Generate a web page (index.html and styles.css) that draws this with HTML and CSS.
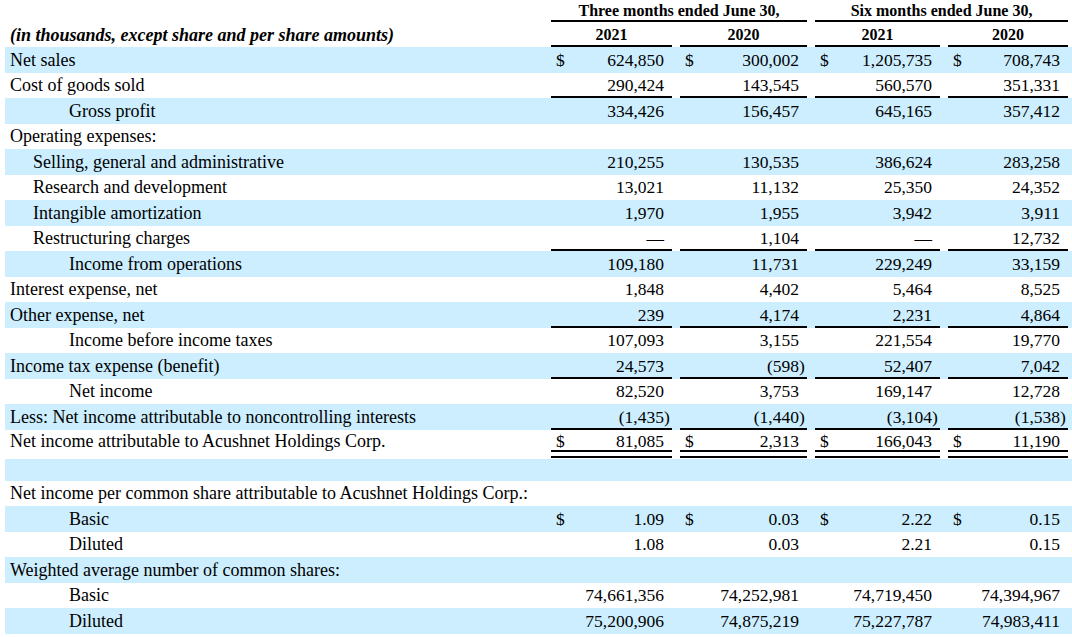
FILE: index.html
```html
<!DOCTYPE html>
<html>
<head>
<meta charset="utf-8">
<title>Statement of Operations</title>
<link rel="stylesheet" href="styles.css">
</head>
<body>
<table class="fin">
  <colgroup>
    <col class="c-label">
    <col class="c-d"><col class="c-n1"><col class="c-p"><col class="c-gap">
    <col class="c-d"><col class="c-n2"><col class="c-p"><col class="c-gap">
    <col class="c-d"><col class="c-n3"><col class="c-p"><col class="c-gap">
    <col class="c-d"><col class="c-n4"><col class="c-p"><col class="c-end">
  </colgroup>
  <tbody>
    <tr class="h1">
      <td></td>
      <td colspan="7" class="hd line">Three months ended June 30,</td>
      <td></td>
      <td colspan="7" class="hd line">Six months ended June 30,</td>
      <td></td>
    </tr>
    <tr class="h2">
      <td class="unit">(in thousands, except share and per share amounts)</td>
      <td colspan="3" class="hd line">2021</td><td></td>
      <td colspan="3" class="hd line">2020</td><td></td>
      <td colspan="3" class="hd line">2021</td><td></td>
      <td colspan="3" class="hd line">2020</td><td></td>
    </tr>

    <tr class="b">
      <td class="lb">Net sales</td>
      <td class="d">$</td><td class="n">624,850</td><td class="p"></td><td></td>
      <td class="d">$</td><td class="n">300,002</td><td class="p"></td><td></td>
      <td class="d">$</td><td class="n">1,205,735</td><td class="p"></td><td></td>
      <td class="d">$</td><td class="n">708,743</td><td class="p"></td><td></td>
    </tr>
    <tr class="u">
      <td class="lb">Cost of goods sold</td>
      <td class="d"></td><td class="n">290,424</td><td class="p"></td><td></td>
      <td class="d"></td><td class="n">143,545</td><td class="p"></td><td></td>
      <td class="d"></td><td class="n">560,570</td><td class="p"></td><td></td>
      <td class="d"></td><td class="n">351,331</td><td class="p"></td><td></td>
    </tr>
    <tr class="b">
      <td class="lb in2">Gross profit</td>
      <td class="d"></td><td class="n">334,426</td><td class="p"></td><td></td>
      <td class="d"></td><td class="n">156,457</td><td class="p"></td><td></td>
      <td class="d"></td><td class="n">645,165</td><td class="p"></td><td></td>
      <td class="d"></td><td class="n">357,412</td><td class="p"></td><td></td>
    </tr>
    <tr>
      <td class="lb">Operating expenses:</td>
      <td colspan="16"></td>
    </tr>
    <tr class="b">
      <td class="lb in1">Selling, general and administrative</td>
      <td class="d"></td><td class="n">210,255</td><td class="p"></td><td></td>
      <td class="d"></td><td class="n">130,535</td><td class="p"></td><td></td>
      <td class="d"></td><td class="n">386,624</td><td class="p"></td><td></td>
      <td class="d"></td><td class="n">283,258</td><td class="p"></td><td></td>
    </tr>
    <tr>
      <td class="lb in1">Research and development</td>
      <td class="d"></td><td class="n">13,021</td><td class="p"></td><td></td>
      <td class="d"></td><td class="n">11,132</td><td class="p"></td><td></td>
      <td class="d"></td><td class="n">25,350</td><td class="p"></td><td></td>
      <td class="d"></td><td class="n">24,352</td><td class="p"></td><td></td>
    </tr>
    <tr class="b">
      <td class="lb in1">Intangible amortization</td>
      <td class="d"></td><td class="n">1,970</td><td class="p"></td><td></td>
      <td class="d"></td><td class="n">1,955</td><td class="p"></td><td></td>
      <td class="d"></td><td class="n">3,942</td><td class="p"></td><td></td>
      <td class="d"></td><td class="n">3,911</td><td class="p"></td><td></td>
    </tr>
    <tr class="u">
      <td class="lb in1">Restructuring charges</td>
      <td class="d"></td><td class="n">—</td><td class="p"></td><td></td>
      <td class="d"></td><td class="n">1,104</td><td class="p"></td><td></td>
      <td class="d"></td><td class="n">—</td><td class="p"></td><td></td>
      <td class="d"></td><td class="n">12,732</td><td class="p"></td><td></td>
    </tr>
    <tr class="b">
      <td class="lb in2">Income from operations</td>
      <td class="d"></td><td class="n">109,180</td><td class="p"></td><td></td>
      <td class="d"></td><td class="n">11,731</td><td class="p"></td><td></td>
      <td class="d"></td><td class="n">229,249</td><td class="p"></td><td></td>
      <td class="d"></td><td class="n">33,159</td><td class="p"></td><td></td>
    </tr>
    <tr>
      <td class="lb">Interest expense, net</td>
      <td class="d"></td><td class="n">1,848</td><td class="p"></td><td></td>
      <td class="d"></td><td class="n">4,402</td><td class="p"></td><td></td>
      <td class="d"></td><td class="n">5,464</td><td class="p"></td><td></td>
      <td class="d"></td><td class="n">8,525</td><td class="p"></td><td></td>
    </tr>
    <tr class="b u">
      <td class="lb">Other expense, net</td>
      <td class="d"></td><td class="n">239</td><td class="p"></td><td></td>
      <td class="d"></td><td class="n">4,174</td><td class="p"></td><td></td>
      <td class="d"></td><td class="n">2,231</td><td class="p"></td><td></td>
      <td class="d"></td><td class="n">4,864</td><td class="p"></td><td></td>
    </tr>
    <tr>
      <td class="lb in2">Income before income taxes</td>
      <td class="d"></td><td class="n">107,093</td><td class="p"></td><td></td>
      <td class="d"></td><td class="n">3,155</td><td class="p"></td><td></td>
      <td class="d"></td><td class="n">221,554</td><td class="p"></td><td></td>
      <td class="d"></td><td class="n">19,770</td><td class="p"></td><td></td>
    </tr>
    <tr class="b u">
      <td class="lb">Income tax expense (benefit)</td>
      <td class="d"></td><td class="n">24,573</td><td class="p"></td><td></td>
      <td class="d"></td><td class="n">(598</td><td class="p">)</td><td></td>
      <td class="d"></td><td class="n">52,407</td><td class="p"></td><td></td>
      <td class="d"></td><td class="n">7,042</td><td class="p"></td><td></td>
    </tr>
    <tr>
      <td class="lb in2">Net income</td>
      <td class="d"></td><td class="n">82,520</td><td class="p"></td><td></td>
      <td class="d"></td><td class="n">3,753</td><td class="p"></td><td></td>
      <td class="d"></td><td class="n">169,147</td><td class="p"></td><td></td>
      <td class="d"></td><td class="n">12,728</td><td class="p"></td><td></td>
    </tr>
    <tr class="b u">
      <td class="lb">Less: Net income attributable to noncontrolling interests</td>
      <td class="d"></td><td class="n">(1,435</td><td class="p">)</td><td></td>
      <td class="d"></td><td class="n">(1,440</td><td class="p">)</td><td></td>
      <td class="d"></td><td class="n">(3,104</td><td class="p">)</td><td></td>
      <td class="d"></td><td class="n">(1,538</td><td class="p">)</td><td></td>
    </tr>
    <tr class="uu">
      <td class="lb">Net income attributable to Acushnet Holdings Corp.</td>
      <td class="d">$</td><td class="n">81,085</td><td class="p"></td><td></td>
      <td class="d">$</td><td class="n">2,313</td><td class="p"></td><td></td>
      <td class="d">$</td><td class="n">166,043</td><td class="p"></td><td></td>
      <td class="d">$</td><td class="n">11,190</td><td class="p"></td><td></td>
    </tr>
    <tr class="b spacer">
      <td class="lb"></td>
      <td colspan="16"></td>
    </tr>
    <tr>
      <td class="lb">Net income per common share attributable to Acushnet Holdings Corp.:</td>
      <td colspan="16"></td>
    </tr>
    <tr class="b">
      <td class="lb in2">Basic</td>
      <td class="d">$</td><td class="n">1.09</td><td class="p"></td><td></td>
      <td class="d">$</td><td class="n">0.03</td><td class="p"></td><td></td>
      <td class="d">$</td><td class="n">2.22</td><td class="p"></td><td></td>
      <td class="d">$</td><td class="n">0.15</td><td class="p"></td><td></td>
    </tr>
    <tr>
      <td class="lb in2">Diluted</td>
      <td class="d"></td><td class="n">1.08</td><td class="p"></td><td></td>
      <td class="d"></td><td class="n">0.03</td><td class="p"></td><td></td>
      <td class="d"></td><td class="n">2.21</td><td class="p"></td><td></td>
      <td class="d"></td><td class="n">0.15</td><td class="p"></td><td></td>
    </tr>
    <tr class="b">
      <td class="lb">Weighted average number of common shares:</td>
      <td colspan="16"></td>
    </tr>
    <tr>
      <td class="lb in2">Basic</td>
      <td class="d"></td><td class="n">74,661,356</td><td class="p"></td><td></td>
      <td class="d"></td><td class="n">74,252,981</td><td class="p"></td><td></td>
      <td class="d"></td><td class="n">74,719,450</td><td class="p"></td><td></td>
      <td class="d"></td><td class="n">74,394,967</td><td class="p"></td><td></td>
    </tr>
    <tr class="b">
      <td class="lb in2">Diluted</td>
      <td class="d"></td><td class="n">75,200,906</td><td class="p"></td><td></td>
      <td class="d"></td><td class="n">74,875,219</td><td class="p"></td><td></td>
      <td class="d"></td><td class="n">75,227,787</td><td class="p"></td><td></td>
      <td class="d"></td><td class="n">74,983,411</td><td class="p"></td><td></td>
    </tr>
  </tbody>
</table>
</body>
</html>
```

FILE: styles.css
```css
html, body {
  margin: 0;
  padding: 0;
  background: #ffffff;
}

body {
  font-family: "Liberation Serif", "Times New Roman", serif;
  color: #000;
}

.fin {
  margin-left: 5px;
  width: 1067px;
  table-layout: fixed;
  border-collapse: separate;
  border-spacing: 0;
  font-size: 17.5px;
}

.c-label { width: 546px; }
.c-d { width: 20px; }
.c-n1 { width: 93px; }
.c-n2 { width: 99px; }
.c-n3 { width: 97px; }
.c-n4 { width: 92px; }
.c-p { width: 8px; }
.c-gap { width: 8px; }
.c-end { width: 4px; }

.fin td {
  padding: 0;
  height: 25.5px;
  line-height: 20px;
  vertical-align: middle;
  white-space: nowrap;
  overflow: visible;
}

.fin tr.b { background: #cceeff; }

.fin tr.h1 td { height: 22px; }
.fin tr.h2 td { height: 25px; }

.hd {
  font-weight: bold;
  font-size: 16px;
  text-align: center;
}

.unit {
  font-weight: bold;
  font-style: italic;
  font-size: 18px;
  padding-left: 5px !important;
}

.line {
  background: linear-gradient(#000, #000) left bottom / 100% 2px no-repeat;
}

.lb {
  font-size: 18px;
  padding-left: 5px !important;
}
.lb.in1 { padding-left: 28px !important; }
.lb.in2 { padding-left: 64px !important; }

.d {
  padding-left: 5px !important;
  text-align: left;
}
.n { text-align: right; }
.p { text-align: left; }

tr.u .d, tr.u .n, tr.u .p {
  background: linear-gradient(#000, #000) left bottom / 100% 2px no-repeat;
}

.fin tr.uu td {
  height: 29.5px;
  vertical-align: top;
  padding-top: 1px;
  box-sizing: border-box;
}

tr.uu .d, tr.uu .n, tr.uu .p {
  background-image: linear-gradient(#000, #000), linear-gradient(#000, #000);
  background-size: 100% 2px, 100% 2px;
  background-position: left bottom 1px, left bottom 7px;
  background-repeat: no-repeat;
}

.fin tr.spacer td { height: 21.5px; }
```
